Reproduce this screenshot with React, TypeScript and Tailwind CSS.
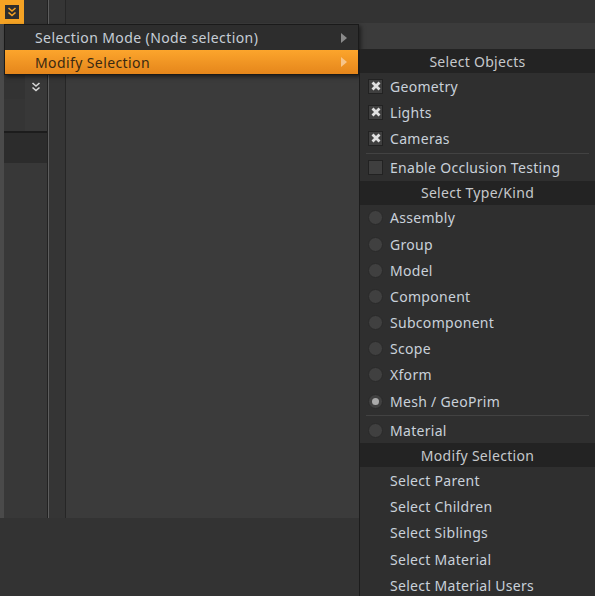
import React from "react";

const font = { fontFamily: '"Noto Sans", "DejaVu Sans", sans-serif' };

function DoubleChevron({ className, color }: { className?: string; color: string }) {
  return (
    <svg viewBox="0 0 12 12" className={className} fill="none" stroke={color} strokeWidth="1.6">
      <path d="M2.5 2 L6 5 L9.5 2" />
      <path d="M2.5 6.5 L6 9.5 L9.5 6.5" />
    </svg>
  );
}

function Arrow({ color }: { color: string }) {
  return (
    <svg viewBox="0 0 6 10" className="h-[10px] w-[6px]">
      <path d="M0 0 L6 5 L0 10 Z" fill={color} />
    </svg>
  );
}

function Header({ label }: { label: string }) {
  return (
    <div className="flex h-[24px] items-center justify-center bg-[#232323] text-[#c6c8cb]">
      {label}
    </div>
  );
}

function Check({ label, checked }: { label: string; checked: boolean }) {
  return (
    <div className="flex h-[26.2px] items-center gap-[7px] pl-[8px]">
      <div className="flex h-[15px] w-[15px] items-center justify-center border border-[#222222] bg-[#3f3f3f]">
        {checked && (
          <svg viewBox="0 0 10 10" className="h-[10px] w-[10px]" stroke="#e0e0e0" strokeWidth="2.8">
            <path d="M1.5 1.5 L8.5 8.5 M8.5 1.5 L1.5 8.5" />
          </svg>
        )}
      </div>
      <span>{label}</span>
    </div>
  );
}

function Radio({ label, selected }: { label: string; selected?: boolean }) {
  return (
    <div className="flex h-[26.2px] items-center gap-[7px] pl-[8px]">
      <div className="flex h-[15px] w-[15px] items-center justify-center rounded-full border border-[#2a2a2a] bg-[#404040]">
        {selected && <div className="h-[7px] w-[7px] rounded-full bg-[#aaaaaa]" />}
      </div>
      <span>{label}</span>
    </div>
  );
}

function Plain({ label }: { label: string }) {
  return <div className="flex h-[26.2px] items-center pl-[30px]">{label}</div>;
}

function Sep() {
  return (
    <div className="flex h-[3px] items-center px-[6px]">
      <div className="h-px w-full bg-[#424242]" />
    </div>
  );
}

export default function App() {
  return (
    <div className="relative h-[596px] w-[595px] overflow-hidden bg-[#333333]" style={font}>
      {/* background panels */}
      <div className="flex h-[518px]">
        <div className="flex w-[47px] flex-col">
          <div className="flex h-[24px] bg-[#333333]">
            <div className="flex h-[24px] w-[24px] items-center justify-center bg-[#f5a324]">
              <div className="flex h-[14px] w-[14px] items-center justify-center bg-[#2e2e2e]">
                <DoubleChevron className="h-[12px] w-[12px]" color="#f5a324" />
              </div>
            </div>
          </div>
          <div className="flex flex-1">
            <div className="w-[4px] bg-[#4a4a4a]" />
            <div className="flex flex-1 flex-col bg-[#383838]">
              <div className="h-[51px]" />
              <div className="flex h-[24px]">
                <div className="w-[21px] bg-[#333333]" />
                <div className="flex flex-1 items-center justify-center">
                  <DoubleChevron className="h-[12px] w-[12px]" color="#d8d8d8" />
                </div>
              </div>
              <div className="flex h-[32px]">
                <div className="w-[21px] bg-[#353535]" />
              </div>
              <div className="h-[2px] bg-[#1c1c1c]" />
              <div className="h-[30px] bg-[#2c2c2c]" />
            </div>
          </div>
        </div>
        <div className="w-px bg-[#222222]" />
        <div className="w-px bg-[#5e5e5e]" />
        <div className="w-[16px] bg-[#353535]" />
        <div className="w-px bg-[#262626]" />
        <div className="flex flex-1 flex-col">
          <div className="h-[23px] bg-[#333333]" />
          <div className="flex-1 bg-[#3b3b3b]" />
        </div>
      </div>

      {/* main menu */}
      <div className="absolute left-[4px] top-[24px] w-[355px] border border-[#1a1a1a] bg-[#2d2d2d] text-[14px] tracking-[0.4px] shadow-[2px_2px_4px_rgba(0,0,0,0.5)]">
        <div className="flex h-[25px] items-center justify-between pl-[30px] pr-[11px] text-[#c6cdd6]">
          <span>Selection Mode (Node selection)</span>
          <Arrow color="#8a8a8a" />
        </div>
        <div className="flex h-[24px] items-center justify-between bg-gradient-to-b from-[#fca52c] to-[#e5861b] pl-[30px] pr-[11px] text-[#3a2912]">
          <span>Modify Selection</span>
          <Arrow color="#f7c58a" />
        </div>
      </div>

      {/* submenu */}
      <div className="absolute left-[359px] top-[49px] h-[560px] w-[236px] border-l border-[#1c1c1c] bg-[#2f2f2f] text-[14px] tracking-[0.3px] text-[#c9d1da]">
        <Header label="Select Objects" />
        <Check label="Geometry" checked />
        <Check label="Lights" checked />
        <Check label="Cameras" checked />
        <Sep />
        <Check label="Enable Occlusion Testing" checked={false} />
        <Header label="Select Type/Kind" />
        <Radio label="Assembly" />
        <Radio label="Group" />
        <Radio label="Model" />
        <Radio label="Component" />
        <Radio label="Subcomponent" />
        <Radio label="Scope" />
        <Radio label="Xform" />
        <Radio label="Mesh / GeoPrim" selected />
        <Sep />
        <Radio label="Material" />
        <Header label="Modify Selection" />
        <Plain label="Select Parent" />
        <Plain label="Select Children" />
        <Plain label="Select Siblings" />
        <Plain label="Select Material" />
        <Plain label="Select Material Users" />
      </div>
    </div>
  );
}
